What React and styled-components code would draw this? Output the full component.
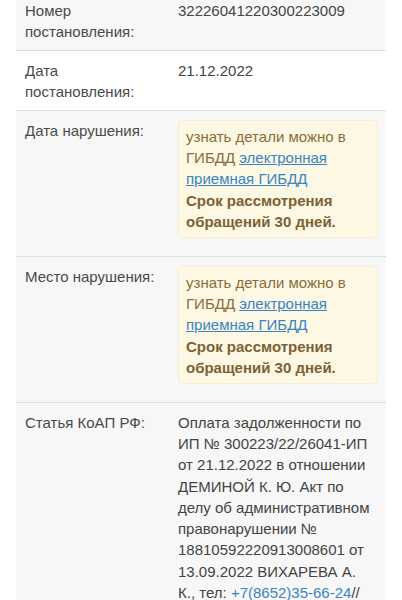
import React from 'react';
import styled, { createGlobalStyle } from 'styled-components';

const GlobalStyle = createGlobalStyle`
body {
    margin: 0;
    background: #fff;
    font-family: "Liberation Sans", Arial, Helvetica, sans-serif;
    color: #444;
}
`

// page is scrolled a little, first row is cut at the top
const Page = styled.div`
padding: 0 16px;
margin-top: -10px;
`

const InfoTable = styled.table`
width: 100%;
border-collapse: collapse;
border-spacing: 0;
table-layout: fixed;
font-size: 15px;
line-height: 21.3px;
`

const Row = styled.tr`
background: ${props => props.$plain ? '#fff' : '#f7f7f7'};
`

const Label = styled.td`
width: 137px;
padding: 8.5px 8px 8px 9px;
vertical-align: top;
border-top: 1px solid #dedede;
color: #4a4a4a;
`

const Value = styled.td`
padding: 8.5px 8px 8px;
vertical-align: top;
border-top: 1px solid #dedede;
color: #444;
`

const Alert = styled.div`
background: #fcf8e3;
border: 1px solid #f8efd2;
border-radius: 3px;
padding: 5px 7px;
margin-bottom: 10px;
color: #8a6d3b;
`

const Link = styled.a`
color: #3a84c4;
text-decoration: underline;
`

const PhoneLink = styled.a`
color: #3a84c4;
text-decoration: none;
`

const Strong = styled.b`
font-weight: bold;
color: #7d6136;
`

const GibddNotice = () => (
    <Alert>
        узнать детали можно в ГИБДД <Link href="#">электронная приемная ГИБДД</Link>
        <br />
        <Strong>Срок рассмотрения обращений 30 дней.</Strong>
    </Alert>
)

export default function App() {
    return (
        <>
            <GlobalStyle />
            <Page>
                <InfoTable>
                    <tbody>
                        <Row>
                            <Label>Номер постановления:</Label>
                            <Value>32226041220300223009</Value>
                        </Row>
                        <Row $plain>
                            <Label>Дата постановления:</Label>
                            <Value>21.12.2022</Value>
                        </Row>
                        <Row>
                            <Label>Дата нарушения:</Label>
                            <Value><GibddNotice /></Value>
                        </Row>
                        <Row>
                            <Label>Место нарушения:</Label>
                            <Value><GibddNotice /></Value>
                        </Row>
                        <Row>
                            <Label>Статья КоАП РФ:</Label>
                            <Value>
                                Оплата задолженности по ИП № 300223/22/26041-ИП от 21.12.2022 в отношении ДЕМИНОЙ К. Ю. Акт по делу об административном правонарушении № 18810592220913008601 от 13.09.2022 ВИХАРЕВА А. К.,{'\u00a0'}тел: <PhoneLink href="#">+7(8652)35-66-24</PhoneLink>// ОСП по Ленинскому району г. Ставрополя
                            </Value>
                        </Row>
                    </tbody>
                </InfoTable>
            </Page>
        </>
    )
}
